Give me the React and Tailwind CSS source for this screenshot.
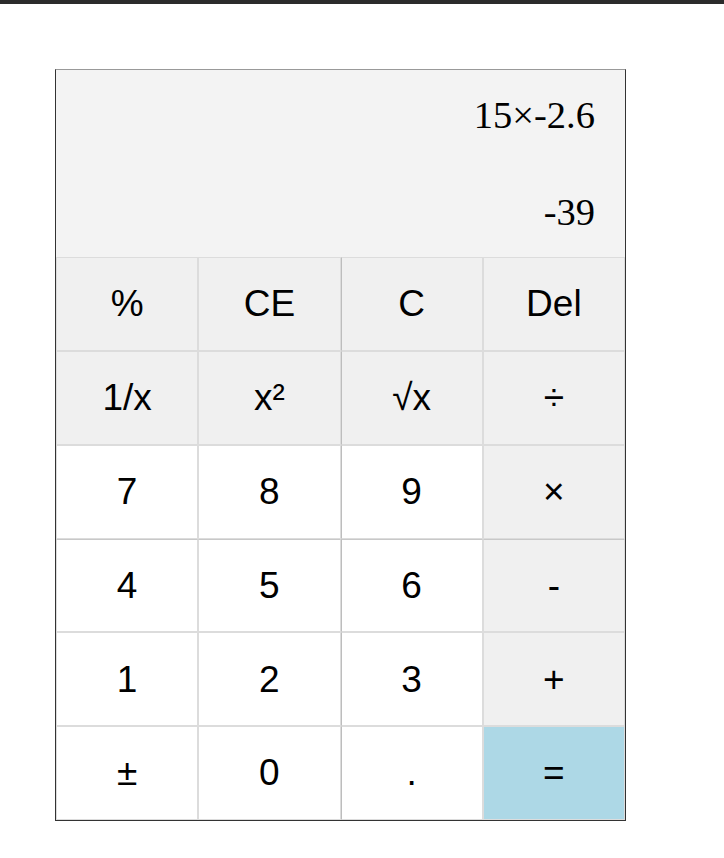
import React from "react";

const keys = [
    { label: "%", kind: "fn" },
    { label: "CE", kind: "fn" },
    { label: "C", kind: "fn" },
    { label: "Del", kind: "fn" },
    { label: "1/x", kind: "fn" },
    { label: "x²", kind: "fn" },
    { label: "√x", kind: "fn" },
    { label: "÷", kind: "fn" },
    { label: "7", kind: "num" },
    { label: "8", kind: "num" },
    { label: "9", kind: "num" },
    { label: "×", kind: "fn" },
    { label: "4", kind: "num" },
    { label: "5", kind: "num" },
    { label: "6", kind: "num" },
    { label: "-", kind: "fn" },
    { label: "1", kind: "num" },
    { label: "2", kind: "num" },
    { label: "3", kind: "num" },
    { label: "+", kind: "fn" },
    { label: "±", kind: "num" },
    { label: "0", kind: "num" },
    { label: ".", kind: "num" },
    { label: "=", kind: "eq" },
];

export default function App() {
    return (
        <div className="min-h-[858px] bg-white">
            <div className="h-[4px] bg-[#2b2b2b]" />
            <div className="pt-[65px] pl-[55px]">
                <div className="w-[571px] border border-[#333] border-t-[#999]">
                    {/* display */}
                    <div
                        className="h-[187px] bg-[#f3f3f3] flex flex-col items-end pr-[30px] pt-[26px] gap-[58px] text-black text-[38.5px] leading-none"
                        style={{ fontFamily: '"Liberation Serif", "Times New Roman", serif' }}
                    >
                        <div>15×-2.6</div>
                        <div>-39</div>
                    </div>
                    <div
                        className="grid grid-cols-4"
                        style={{ fontFamily: '"Liberation Sans", Arial, sans-serif' }}
                    >
                        {keys.map((k, i) => (
                            <button
                                key={k.label}
                                className={
                                    "h-[93.85px] border border-[#dcdcdc] flex items-center justify-center text-[37px] text-black " +
                                    (i % 4 === 2 ? "border-l-[#bdbdbd] " : "") +
                                    (i >= 12 && i < 16 ? "border-t-[#c8c8c8] " : "") +
                                    (k.kind === "eq"
                                        ? "bg-[#add8e6]"
                                        : k.kind === "fn"
                                        ? "bg-[#f0f0f0]"
                                        : "bg-white")
                                }
                            >
                                {k.label}
                            </button>
                        ))}
                    </div>
                </div>
            </div>
        </div>
    );
}
